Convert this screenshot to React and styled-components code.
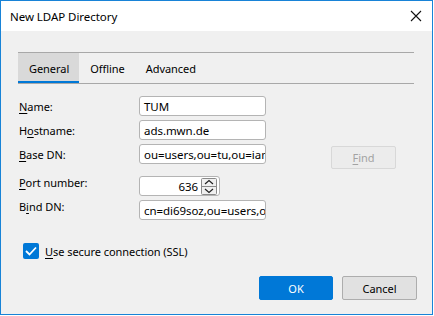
import React from 'react';
import styled, {createGlobalStyle} from 'styled-components';

const Global = createGlobalStyle`
  html, body {
    margin: 0;
    padding: 0;
    background: #ffffff;
  }
  body {
    font-family: "Noto Sans", "Open Sans", sans-serif;
    font-size: 11px;
    letter-spacing: -0.05px;
    color: #000;
  }
`

const Window = styled.div`
  box-sizing: border-box;
  width: 433px;
  height: 315px;
  border: 1px solid #1883d7;
  display: flex;
  flex-direction: column;
  background: #f0f0f0;
`

const TitleBar = styled.div`
  height: 30px;
  background: #fff;
  display: flex;
  align-items: center;
  justify-content: space-between;
  padding: 0 9px 0 9px;
  flex-shrink: 0;

  .title {
    font-size: 11.5px;
    margin-top: 1px;
  }
`

const Body = styled.div`
  flex: 1;
  padding: 21px 18px 0 17px;
  display: flex;
  flex-direction: column;
`

const TabBar = styled.div`
  display: flex;
  border-top: 1px solid #a8a8a8;
  border-bottom: 1px solid #a8a8a8;
`

const Tab = styled.div`
  box-sizing: border-box;
  height: 30px;
  padding: 0 10px 0 11px;
  display: flex;
  align-items: center;
  background: ${p => p.active ? '#d9d9d9' : 'transparent'};
  border-bottom: 2px solid ${p => p.active ? '#0078d7' : 'transparent'};
  padding-top: 2px;
`

const Form = styled.div`
  display: grid;
  grid-template-columns: 120px 127px 65px 65px;
  grid-template-rows: 20px 20px 20px 20px 20px;
  row-gap: 4px;
  margin-top: 12px;
  margin-left: 1px;
`

const Label = styled.div`
  display: flex;
  align-items: center;
  grid-column: 1;
  margin-top: ${p => p.shift ? '8px' : '0'};

  u {
    text-decoration: underline;
    text-underline-offset: 2px;
  }
`

const Field = styled.div`
  box-sizing: border-box;
  grid-column: 2;
  height: 20px;
  background: #fff;
  border: 1px solid #b4b4b4;
  border-radius: 3px;
  display: flex;
  align-items: center;
  padding: 0 4px;
  overflow: hidden;
  white-space: nowrap;
  font-size: 11.5px;
  margin-top: ${p => p.shift ? '8px' : '0'};
  width: ${p => p.narrow ? '81px' : '127px'};
  justify-content: ${p => p.narrow ? 'flex-end' : 'flex-start'};
  padding-right: ${p => p.narrow ? '2px' : '4px'};
`

const Spinner = styled.svg`
  margin-left: 3px;
  flex-shrink: 0;
`

const FindButton = styled.div`
  box-sizing: border-box;
  grid-column: 4;
  grid-row: 3;
  align-self: start;
  margin-top: 2px;
  height: 23px;
  border: 1px solid #d8d8d8;
  border-radius: 2px;
  background: #ececec;
  color: #a3a3a3;
  display: flex;
  align-items: center;
  justify-content: center;

  u {
    text-underline-offset: 2px;
  }
`

const CheckRow = styled.div`
  display: flex;
  align-items: center;
  margin-top: 31px;
  margin-left: 5px;
  gap: 6px;

  u {
    text-underline-offset: 2px;
  }
`

const Box = styled.div`
  width: 16px;
  height: 16px;
  border-radius: 2px;
  background: #0078d7;
  display: flex;
  align-items: center;
  justify-content: center;
`

const Buttons = styled.div`
  display: flex;
  justify-content: flex-end;
  gap: 9px;
  margin-top: 17px;
  margin-right: -3px;
`

const Button = styled.div`
  box-sizing: border-box;
  width: ${p => p.primary ? '74px' : '75px'};
  height: 24px;
  border-radius: 2px;
  display: flex;
  align-items: center;
  justify-content: center;
  background: ${p => p.primary ? '#0078d7' : '#e1e1e1'};
  color: ${p => p.primary ? '#fff' : '#000'};
  border: 1px solid ${p => p.primary ? '#0078d7' : '#adadad'};
`

const rows = [
  {label: <><u>N</u>ame:</>, value: 'TUM'},
  {label: <>H<u>o</u>stname:</>, value: 'ads.mwn.de'},
  {label: <><u>B</u>ase DN:</>, value: 'ou=users,ou=tu,ou=iam,o=mwn,c=de'},
]

export default function App() {
  return (
    <>
      <Global/>
      <Window>
        <TitleBar>
          <span className="title">New LDAP Directory</span>
          <svg width="12" height="12" viewBox="0 0 12 12" style={{marginRight: '1px'}}>
            <path d="M1 1 L11 11 M11 1 L1 11" stroke="#111" strokeWidth="1.1" fill="none"/>
          </svg>
        </TitleBar>
        <Body>
          <TabBar>
            <Tab active>General</Tab>
            <Tab>Offline</Tab>
            <Tab>Advanced</Tab>
          </TabBar>
          <Form>
            {rows.map((r, i) => (
              <React.Fragment key={i}>
                <Label>{r.label}</Label>
                <Field>{r.value}</Field>
              </React.Fragment>
            ))}
            <Label shift><u>P</u>ort number:</Label>
            <Field shift narrow>
              636
              <Spinner width="16" height="17" viewBox="0 0 16 17">
                <rect x="0.5" y="0.5" width="15" height="16" rx="1" fill="#f0f0f0" stroke="#8a8a8a"/>
                <line x1="1" y1="8.5" x2="15" y2="8.5" stroke="#8a8a8a"/>
                <path d="M4 6 L8 2.5 L12 6" stroke="#222" strokeWidth="1.2" fill="none"/>
                <path d="M4 11 L8 14.5 L12 11" stroke="#222" strokeWidth="1.2" fill="none"/>
              </Spinner>
            </Field>
            <Label shift>B<u>i</u>nd DN:</Label>
            <Field shift>cn=di69soz,ou=users,ou=tu,o=mwn,c=de</Field>
            <FindButton><span><u>F</u>ind</span></FindButton>
          </Form>
          <CheckRow>
            <Box>
              <svg width="12" height="10" viewBox="0 0 12 10">
                <path d="M1 5 L4.5 8.5 L11 1.5" stroke="#fff" strokeWidth="1.8" fill="none"/>
              </svg>
            </Box>
            <span><u>U</u>se secure connection (SSL)</span>
          </CheckRow>
          <Buttons>
            <Button primary>OK</Button>
            <Button>Cancel</Button>
          </Buttons>
        </Body>
      </Window>
    </>
  );
}
